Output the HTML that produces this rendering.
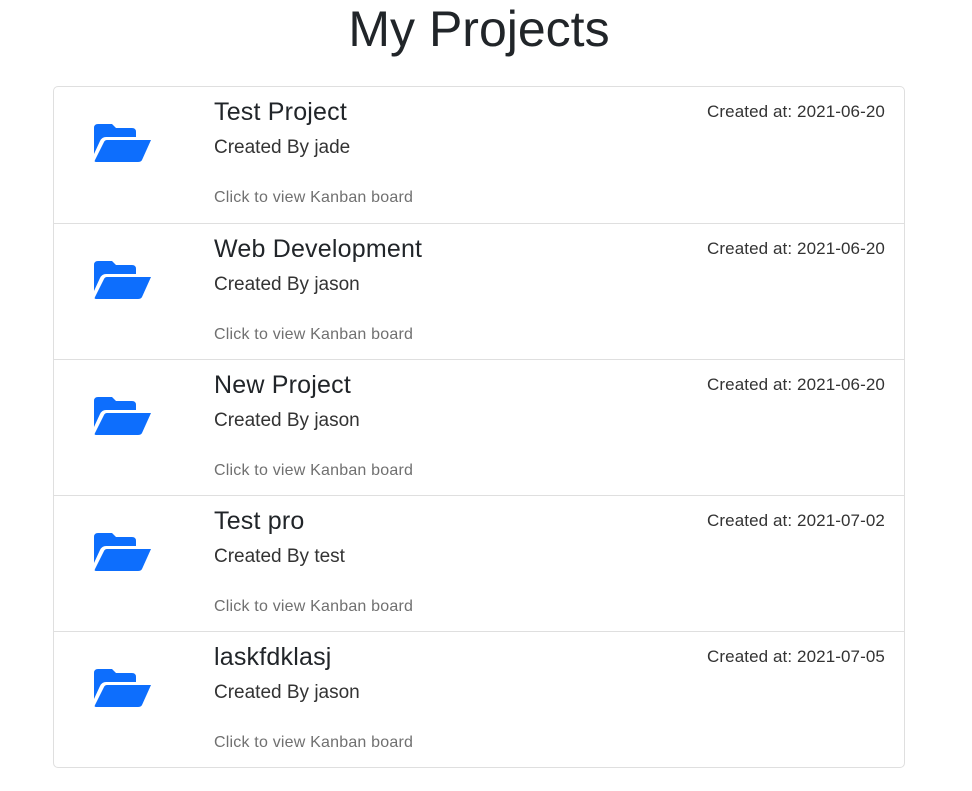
<!DOCTYPE html>
<html><head><meta charset="utf-8"><style>
body{margin:0;background:#fff;font-family:"Liberation Sans",sans-serif;color:#212529;width:972px;height:791px;overflow:hidden}
h1{margin:0;position:absolute;top:0;left:0;width:958px;text-align:center;font-size:50px;font-weight:500;line-height:58px}
.list{position:absolute;left:53px;top:86px;width:850px;border:1px solid #dfdfdf;border-radius:5px}
.row{position:relative;height:136px;border-top:1px solid #dfdfdf;box-sizing:border-box}
.row:first-child{border-top:none;height:136px}
.row svg{position:absolute;left:40px;top:37px}
.t{position:absolute;left:160px;top:11px;font-size:25px;font-weight:500;letter-spacing:0.2px}
.c{position:absolute;left:160px;top:50px;font-size:19px;color:#333}
.k{position:absolute;left:160px;top:102px;font-size:16px;color:#707070;letter-spacing:0.2px}
.d{position:absolute;right:19px;top:15px;font-size:17px;color:#333;letter-spacing:0.1px}
</style></head><body>
<h1>My Projects</h1>
<div class="list">
<div class="row"><svg width="57" height="38" viewBox="0 0 57 38"><path fill="#0d6efd" d="M0,4q0-4 4-4h14l4,4h16q4,0 4,4v5H12q-4,0-6,4L0,30Z"/><path fill="#0d6efd" d="M13,16H57L48,36q-1,2-4,2H2Q0,38 1,36L10,18q1-2 3-2Z"/></svg><div class="t">Test Project</div><div class="c">Created By jade</div><div class="k">Click to view Kanban board</div><div class="d">Created at: 2021-06-20</div></div>
<div class="row"><svg width="57" height="38" viewBox="0 0 57 38"><path fill="#0d6efd" d="M0,4q0-4 4-4h14l4,4h16q4,0 4,4v5H12q-4,0-6,4L0,30Z"/><path fill="#0d6efd" d="M13,16H57L48,36q-1,2-4,2H2Q0,38 1,36L10,18q1-2 3-2Z"/></svg><div class="t">Web Development</div><div class="c">Created By jason</div><div class="k">Click to view Kanban board</div><div class="d">Created at: 2021-06-20</div></div>
<div class="row"><svg width="57" height="38" viewBox="0 0 57 38"><path fill="#0d6efd" d="M0,4q0-4 4-4h14l4,4h16q4,0 4,4v5H12q-4,0-6,4L0,30Z"/><path fill="#0d6efd" d="M13,16H57L48,36q-1,2-4,2H2Q0,38 1,36L10,18q1-2 3-2Z"/></svg><div class="t">New Project</div><div class="c">Created By jason</div><div class="k">Click to view Kanban board</div><div class="d">Created at: 2021-06-20</div></div>
<div class="row"><svg width="57" height="38" viewBox="0 0 57 38"><path fill="#0d6efd" d="M0,4q0-4 4-4h14l4,4h16q4,0 4,4v5H12q-4,0-6,4L0,30Z"/><path fill="#0d6efd" d="M13,16H57L48,36q-1,2-4,2H2Q0,38 1,36L10,18q1-2 3-2Z"/></svg><div class="t">Test pro</div><div class="c">Created By test</div><div class="k">Click to view Kanban board</div><div class="d">Created at: 2021-07-02</div></div>
<div class="row"><svg width="57" height="38" viewBox="0 0 57 38"><path fill="#0d6efd" d="M0,4q0-4 4-4h14l4,4h16q4,0 4,4v5H12q-4,0-6,4L0,30Z"/><path fill="#0d6efd" d="M13,16H57L48,36q-1,2-4,2H2Q0,38 1,36L10,18q1-2 3-2Z"/></svg><div class="t">laskfdklasj</div><div class="c">Created By jason</div><div class="k">Click to view Kanban board</div><div class="d">Created at: 2021-07-05</div></div>
</div>
</body></html>
